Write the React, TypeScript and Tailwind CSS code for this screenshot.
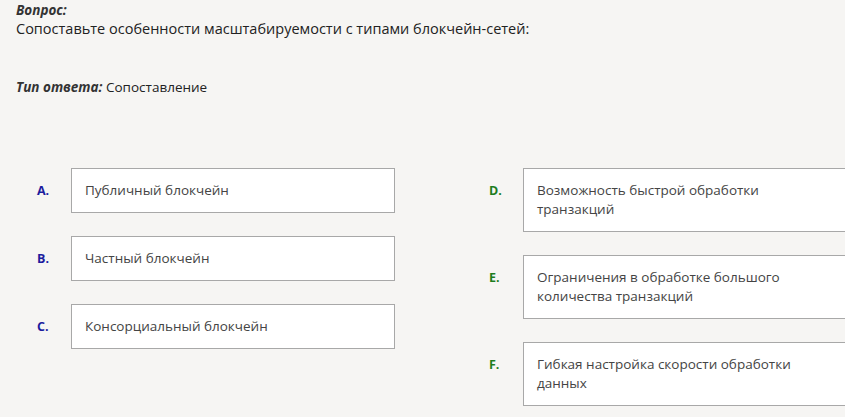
import React from "react";

const left = [
  { key: "A.", text: "Публичный блокчейн" },
  { key: "B.", text: "Частный блокчейн" },
  { key: "C.", text: "Консорциальный блокчейн" },
];

const right = [
  { key: "D.", text: "Возможность быстрой обработки транзакций" },
  { key: "E.", text: "Ограничения в обработке большого количества транзакций" },
  { key: "F.", text: "Гибкая настройка скорости обработки данных" },
];

function Row({ label, text, color }: { label: string; text: string; color: string }) {
  return (
    <div className="flex items-start">
      <div className={`w-[34px] shrink-0 pt-[13px] text-[12.5px] leading-[19px] font-bold ${color}`}>{label}</div>
      <div className="flex-1 border border-[#a8a8a8] bg-white pl-[13px] pr-[22px] py-3 text-[13.5px] leading-[19px] text-[#444]">
        {text}
      </div>
    </div>
  );
}

export default function App() {
  return (
    <div
      className="min-h-screen w-full overflow-hidden bg-[#f6f5f3] px-4"
      style={{ fontFamily: '"Open Sans", "Noto Sans", sans-serif' }}
    >
      <div className="text-[13.5px] leading-[20px] font-bold italic text-[#333]">Вопрос:</div>
      <div className="text-[14.5px] leading-[18px] text-[#222]">
        Сопоставьте особенности масштабируемости с типами блокчейн-сетей:
      </div>
      <div className="mt-[39px] text-[13.5px] leading-[20px] text-[#222]">
        <span className="font-bold italic text-[#333]">Тип ответа:</span> Сопоставление
      </div>

      <div className="ml-[21px] mt-[71px] grid w-[810px] grid-cols-[358px_358px] gap-x-[94px]">
        <div className="flex flex-col gap-[23px]">
          {left.map((r) => (
            <Row key={r.key} label={r.key} text={r.text} color="text-[#1c1c9e]" />
          ))}
        </div>
        <div className="flex flex-col gap-[23px]">
          {right.map((r) => (
            <Row key={r.key} label={r.key} text={r.text} color="text-[#1e7d1e]" />
          ))}
        </div>
      </div>
    </div>
  );
}
